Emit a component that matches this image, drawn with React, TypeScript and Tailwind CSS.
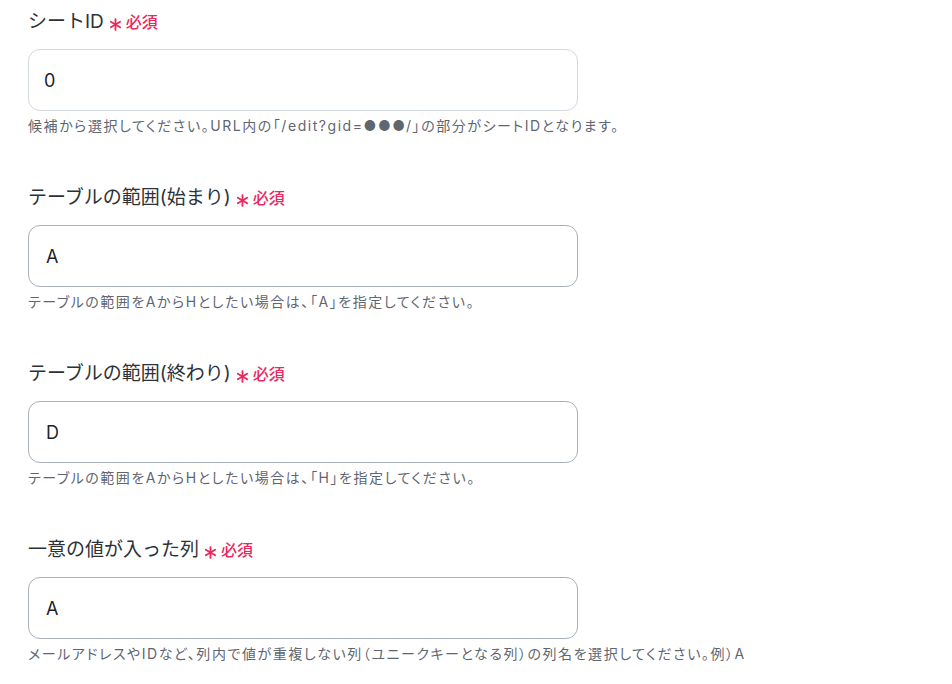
import React from "react";

const Asterisk = () => (
  <svg width="13" height="13" viewBox="0 0 14 14" className="mt-[5px]" aria-hidden>
    <g stroke="#e8295d" strokeWidth="2" strokeLinecap="round">
      <line x1="7" y1="1.2" x2="7" y2="12.8" />
      <line x1="2" y1="4.1" x2="12" y2="9.9" />
      <line x1="2" y1="9.9" x2="12" y2="4.1" />
    </g>
  </svg>
);

type Field = { label: string; value: string; help: string; light?: boolean; pl: string };

const fields: Field[] = [
  {
    label: "シートID",
    value: "0",
    help: "候補から選択してください。URL内の「/edit?gid=●●●/」の部分がシートIDとなります。",
    light: true,
    pl: "pl-[15px]",
  },
  {
    label: "テーブルの範囲(始まり)",
    value: "A",
    help: "テーブルの範囲をAからHとしたい場合は、「A」を指定してください。",
    pl: "pl-[17px]",
  },
  {
    label: "テーブルの範囲(終わり)",
    value: "D",
    help: "テーブルの範囲をAからHとしたい場合は、「H」を指定してください。",
    pl: "pl-[17px]",
  },
  {
    label: "一意の値が入った列",
    value: "A",
    help: "メールアドレスやIDなど、列内で値が重複しない列（ユニークキーとなる列）の列名を選択してください。例）A",
    pl: "pl-[17px]",
  },
];

export default function App() {
  return (
    <div
      className="w-[952px] h-[684px] bg-white overflow-hidden pt-[10px] px-[28px] flex flex-col gap-[50px]"
      style={{ fontFamily: 'Inter, "Noto Sans CJK JP", sans-serif' }}
    >
      {fields.map((f, i) => (
        <div key={i} className="flex flex-col">
          <div className="h-[24px] flex items-center">
            <span className="text-[19px] font-normal text-[#2d3238] leading-[24px]">{f.label}</span>
            <span className="ml-[5px] flex"><Asterisk /></span>
            <span className="ml-[4px] text-[16px] font-medium text-[#e8295d] leading-[24px]">必須</span>
          </div>
          <div
            className={`mt-[15px] w-[550px] h-[62px] rounded-[12px] border ${
              f.light ? "border-[#d3d7de]" : "border-[#a9b0ba]"
            } ${f.pl} flex items-center text-[18px] text-[#1f2328]`}
          >
            {f.value}
          </div>
          <div className="mt-[5px] text-[14px] leading-[20px] text-[#5f6670] whitespace-nowrap tracking-[1.55px] [font-feature-settings:'palt']">
            {f.help}
          </div>
        </div>
      ))}
    </div>
  );
}
